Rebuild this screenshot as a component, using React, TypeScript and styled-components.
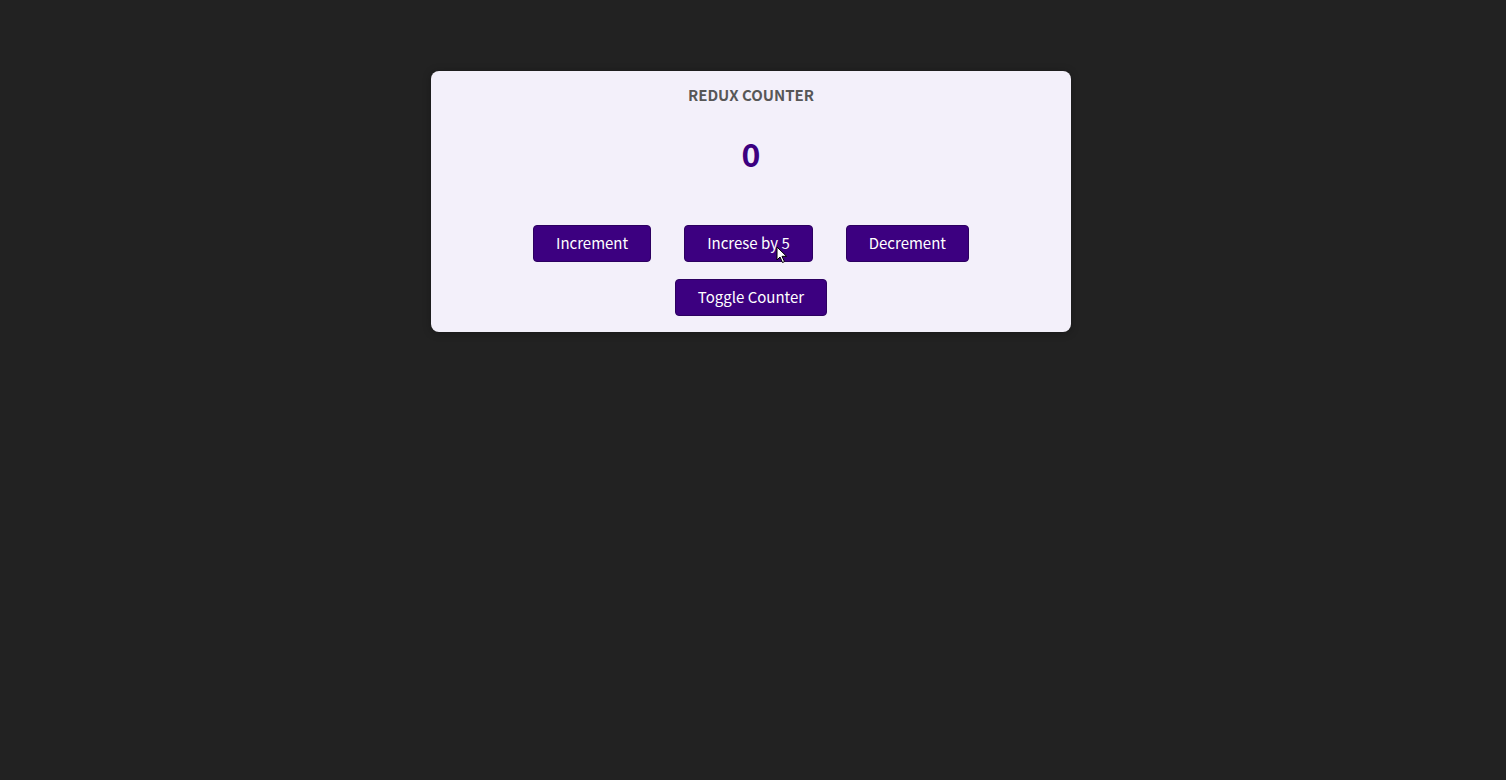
import React from "react";
import styled, { createGlobalStyle } from "styled-components";

const GlobalStyle = createGlobalStyle`
  html, body {
    margin: 0;
    padding: 0;
    background: #222222;
    font-family: "Noto Sans CJK KR", "Noto Sans", sans-serif;
  }
`;

const Page = styled.div`
  min-height: 780px;
  padding-top: 71px;
  padding-right: 4px;
  box-sizing: border-box;
`;

const Card = styled.main`
  position: relative;
  margin: 0 auto;
  width: 640px;
  box-sizing: border-box;
  padding: 16px 16px 16px;
  background: #f3f0fa;
  border-radius: 8px;
  box-shadow: 0 1px 8px rgba(0, 0, 0, 0.3);
  text-align: center;
`;

const Title = styled.h1`
  margin: 0;
  font-size: 15px;
  font-weight: 700;
  color: #575757;
  text-transform: uppercase;
  line-height: 16px;
`;

const Value = styled.div`
  margin: 32px 0 54px;
  font-size: 32px;
  font-weight: 700;
  color: #3c0080;
  line-height: 36px;
`;

const Row = styled.div<{ $gap?: number; $mb?: number }>`
  display: flex;
  justify-content: center;
  gap: ${(p) => p.$gap ?? 0}px;
  margin-bottom: ${(p) => p.$mb ?? 0}px;
`;

const Button = styled.button`
  font: inherit;
  font-size: 15px;
  line-height: 21px;
  height: 37px;
  background: #3c0080;
  border: 1px solid #2c0060;
  color: #ffffff;
  padding: 0 22px 3px;
  border-radius: 4px;
  cursor: pointer;
`;

const Cursor = styled.svg`
  position: absolute;
  left: 345px;
  top: 175px;
  width: 12px;
  height: 18px;
  pointer-events: none;
`;

export default function App() {
  return (
    <>
      <GlobalStyle />
      <Page>
        <Card>
          <Title>Redux Counter</Title>
          <Value>0</Value>
          <Row $gap={33} $mb={17}>
            <Button>Increment</Button>
            <Button>Increse by 5</Button>
            <Button>Decrement</Button>
          </Row>
          <Row>
            <Button>Toggle Counter</Button>
          </Row>
          <Cursor viewBox="0 0 12 18">
            <path
              d="M1 1 L1 14 L4 11 L6.5 16.5 L8.5 15.6 L6 10.3 L10.5 10.3 Z"
              fill="#fff"
              stroke="#000"
              strokeWidth="1"
              strokeLinejoin="round"
            />
          </Cursor>
        </Card>
      </Page>
    </>
  );
}
